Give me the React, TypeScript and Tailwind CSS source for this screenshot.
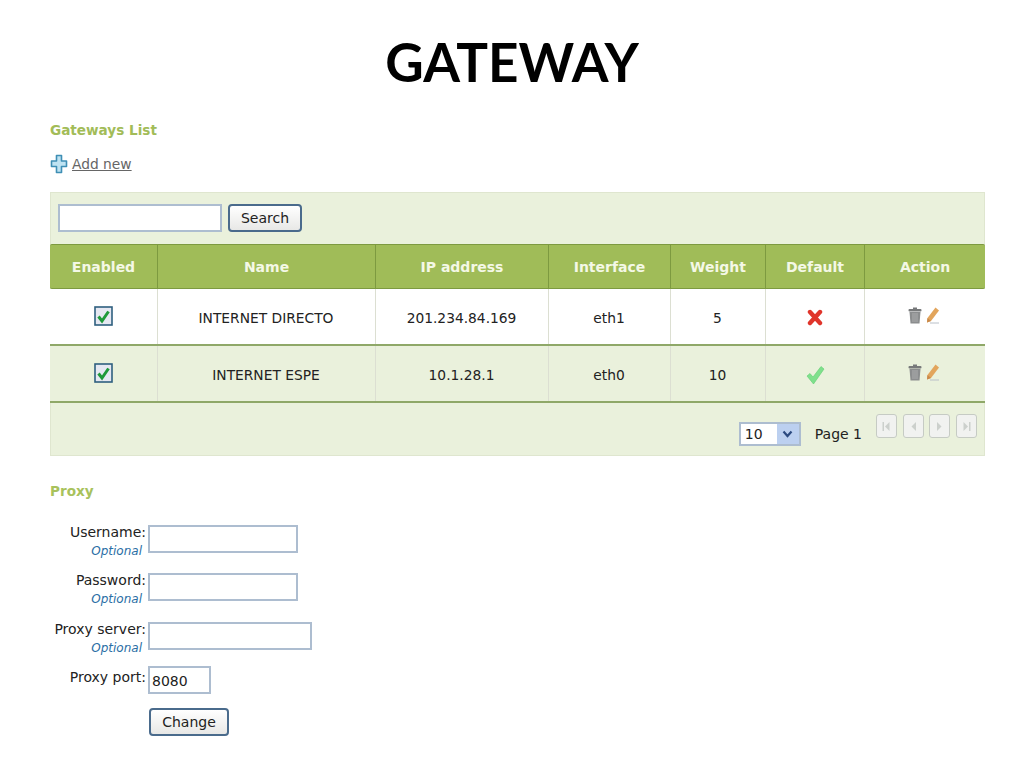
import React from 'react';

const columns = ['Enabled', 'Name', 'IP address', 'Interface', 'Weight', 'Default', 'Action'];
const gridCols = 'grid grid-cols-[108px_218px_173px_122px_95px_99px_120px]';

const rows = [
  { name: 'INTERNET DIRECTO', ip: '201.234.84.169', iface: 'eth1', weight: '5', isDefault: false },
  { name: 'INTERNET ESPE', ip: '10.1.28.1', iface: 'eth0', weight: '10', isDefault: true },
];

const CheckBox = () => (
  <svg width="19" height="20" viewBox="0 0 19 20">
    <rect x="1" y="1" width="17" height="18" fill="#e6e8f2" stroke="#2f5f7f" strokeWidth="1.6" />
    <path d="M4.5 10.5 L8 15 L14.5 5.5" fill="none" stroke="#1f9a3a" strokeWidth="3" />
  </svg>
);

const PlusIcon = () => (
  <svg width="18" height="20" viewBox="0 0 18 20">
    <path
      d="M6.5 1.5 h5 v5.5 h5 v5.5 h-5 v6 h-5 v-6 h-5 v-5.5 h5 z"
      fill="#bfe3f2"
      stroke="#3f8fb5"
      strokeWidth="1.6"
      strokeLinejoin="round"
    />
  </svg>
);

const CrossIcon = () => (
  <svg width="16" height="17" viewBox="0 0 16 17">
    <path d="M3 3 L13 14 M13 3 L3 14" stroke="#e0352b" strokeWidth="4.4" strokeLinecap="round" />
  </svg>
);

const TickIcon = () => (
  <svg width="19" height="20" viewBox="0 0 19 20">
    <path d="M1 11 L4 8.5 L7 12 L15 1.5 L18 4 L7.5 19 Z" fill="#7fe08c" stroke="#5fce70" strokeWidth="0.6" />
  </svg>
);

const TrashIcon = () => (
  <svg width="14" height="17" viewBox="0 0 14 17">
    <rect x="0.5" y="2" width="13" height="2.5" rx="1" fill="#77797a" />
    <rect x="5" y="0.5" width="4" height="2" fill="#77797a" />
    <path d="M1.5 5 H12.5 L11.5 16.5 H2.5 Z" fill="#8b8d8e" />
    <path d="M5 6 V15 M7 6 V15 M9 6 V15" stroke="#b5b6b7" strokeWidth="0.8" />
  </svg>
);

const PencilIcon = () => (
  <svg width="14" height="17" viewBox="0 0 14 17">
    <path d="M1.5 11 L9.5 0.5 L13 3.5 L5 14 L1 15.5 Z" fill="#e2a55c" />
    <path d="M1.5 11 L5 14 L1 15.5 Z" fill="#c9894a" />
    <path d="M4 16 H13" stroke="#b9c0c8" strokeWidth="1" />
  </svg>
);

const PagerButton = ({ d, bar }: { d: string; bar?: 'left' | 'right' }) => (
  <div className="w-[21px] h-[24px] flex items-center justify-center rounded-[3px] border border-[#c6cbc4] bg-[#f1f2f0]">
    <svg width="9" height="11" viewBox="0 0 9 11">
      <path d={d} fill="#ccd0cc" />
      {bar === 'left' && <rect x="0.5" y="1" width="1.5" height="9" fill="#ccd0cc" />}
      {bar === 'right' && <rect x="7" y="1" width="1.5" height="9" fill="#ccd0cc" />}
    </svg>
  </div>
);

const FormRow = ({
  label,
  optional,
  inputClass,
  labelClass,
  value,
}: {
  label: string;
  optional?: boolean;
  inputClass: string;
  labelClass?: string;
  value?: string;
}) => (
  <div className="flex items-start">
    <div className="w-[96px] mr-[2px] text-right">
      <div className={`text-[14px] leading-[15px] text-[#222] whitespace-nowrap ${labelClass ?? ''}`}>{label}</div>
      {optional && <div className="mt-[4px] text-[12px] leading-[14px] italic text-[#2a6ea5] pr-[4px]">Optional</div>}
    </div>
    <div className={`h-[28px] border-2 border-[#adbdd0] bg-white text-[14px] leading-[26px] pl-[2px] text-[#222] ${inputClass}`}>
      {value}
    </div>
  </div>
);

const App: React.FC = () => {
  return (
    <div className="w-[1024px] h-[768px] bg-white overflow-hidden font-['DejaVu_Sans',sans-serif]">
      <h1 className="pt-[28px] h-[118px] text-center text-[53px] leading-[68px] font-bold text-black font-['Lato',sans-serif]">
        GATEWAY
      </h1>

      <div className="pl-[50px]">
        <h2 className="mt-px text-[13.6px] leading-[22px] font-bold text-[#a2bc58]">Gateways List</h2>

        {/* Add new */}
        <div className="mt-[13px] h-[20px] flex items-center gap-[4px]">
          <PlusIcon />
          <span className="text-[13.8px] leading-[18px] text-[#666] underline">Add new</span>
        </div>

        {/* Table */}
        <div className="mt-[18px] w-[935px] bg-[#eaf1dc] border border-[#dfe6cf]">
          <div className="h-[51px] pl-[7px] pb-[2px] flex items-center gap-[6px]">
            <div className="w-[164px] h-[28px] border-2 border-[#adbdd0] bg-white" />
            <button className="w-[74px] h-[28px] rounded-[4px] border-2 border-[#4a6b8c] bg-gradient-to-b from-white to-[#e8e8e6] text-[14px] leading-[22px] text-[#222]">
              Search
            </button>
          </div>

          <div className={`${gridCols} -mx-px h-[45px] bg-[#a0bc58] border-y border-[#7d9a40] rounded-[2px]`}>
            {columns.map((col, i) => (
              <div
                key={col}
                className={`flex items-center justify-center pt-[2px] text-[14px] font-bold text-[#f4f8e6] ${i < 6 ? 'border-r border-[#7d9a40]' : ''}`}
              >
                {col}
              </div>
            ))}
          </div>

          {rows.map((row, i) => (
            <div
              key={row.name}
              className={`${gridCols} -mx-px h-[57px] border-b-2 border-[#8fa868] text-[13.8px] text-[#222] ${i === 0 ? 'bg-white' : 'bg-[#eaf1dc]'}`}
            >
              <div className="flex items-center justify-center pb-[2px] border-r border-[#dcdfd2]">
                <CheckBox />
              </div>
              <div className="flex items-center justify-center pt-[4px] pr-[1px] border-r border-[#dcdfd2]">{row.name}</div>
              <div className="flex items-center justify-center pt-[4px] pr-[1px] border-r border-[#dcdfd2]">{row.ip}</div>
              <div className="flex items-center justify-center pt-[4px] pr-[1px] border-r border-[#dcdfd2]">{row.iface}</div>
              <div className="flex items-center justify-center pt-[4px] pr-[1px] border-r border-[#dcdfd2]">{row.weight}</div>
              <div className="flex items-center justify-center pt-[2px] border-r border-[#dcdfd2]">
                {row.isDefault ? <TickIcon /> : <CrossIcon />}
              </div>
              <div className="flex items-start justify-center pt-[18px] pr-[2px] gap-[4px]">
                <TrashIcon />
                <PencilIcon />
              </div>
            </div>
          ))}

          {/* Pager */}
          <div className="h-[52px] flex items-start justify-end pr-[7px] pt-[11px] text-[14px] text-[#222]">
            <div className="mt-[8px] w-[62px] h-[24px] flex items-center justify-between border-2 border-[#adbdd0] bg-white pl-[4px]">
              <span>10</span>
              <span className="w-[22px] h-[20px] flex items-center justify-center bg-[#bcd0f0]">
                <svg width="11" height="8" viewBox="0 0 11 8">
                  <path d="M1.5 1.5 L5.5 6 L9.5 1.5" fill="none" stroke="#2c4a80" strokeWidth="2.2" />
                </svg>
              </span>
            </div>
            <span className="ml-[14px] mt-[9px] leading-[22px]">Page 1</span>
            <div className="ml-[14px] flex gap-[5.67px]">
              <PagerButton d="M7.5 1 L3 5.5 L7.5 10 Z" bar="left" />
              <PagerButton d="M7 1 L2.5 5.5 L7 10 Z" />
              <PagerButton d="M2 1 L6.5 5.5 L2 10 Z" />
              <PagerButton d="M1.5 1 L6 5.5 L1.5 10 Z" bar="right" />
            </div>
          </div>
        </div>

        {/* Proxy */}
        <h2 className="mt-[24px] text-[13.6px] leading-[22px] font-bold text-[#a8c25c]">Proxy</h2>
        <div className="mt-[23px] flex flex-col">
          <FormRow label="Username:" optional inputClass="w-[150px]" />
          <div className="h-[15px]" />
          <FormRow label="Password:" optional inputClass="w-[150px]" />
          <div className="h-[16px]" />
          <FormRow label="Proxy server:" optional inputClass="w-[164px]" />
          <div className="h-[11px]" />
          <FormRow label="Proxy port:" labelClass="mt-[4px]" inputClass="w-[63px]" value="8080" />
        </div>
        <button className="mt-[14px] ml-[99px] w-[80px] h-[28px] rounded-[4px] border-2 border-[#4a6b8c] bg-gradient-to-b from-white to-[#e8e8e6] text-[14px] leading-[22px] text-[#222]">
          Change
        </button>
      </div>
    </div>
  );
};

export default App;
